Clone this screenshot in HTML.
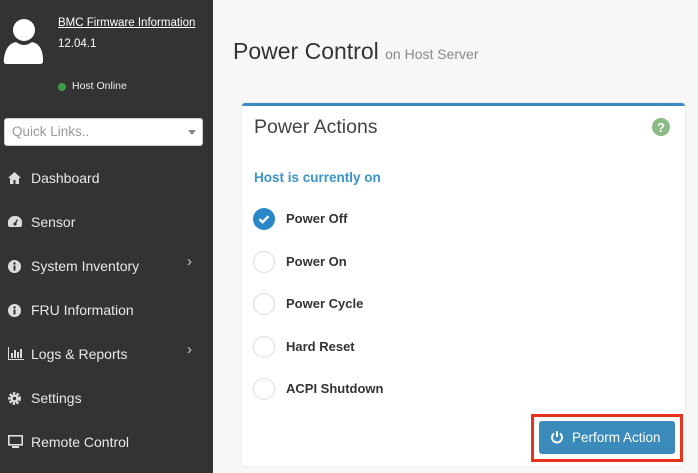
<!DOCTYPE html>
<html><head><meta charset="utf-8"><style>
*{box-sizing:border-box;margin:0;padding:0}
body{width:698px;height:473px;overflow:hidden;background:#f7f7f7;font-family:"Liberation Sans",sans-serif;position:relative}
.sb{position:absolute;left:0;top:0;width:213px;height:473px;background:#333}
.abs{position:absolute;white-space:nowrap}
.menu{color:#e8e8e8;font-size:14px;left:31px}
.ic{position:absolute;left:8px}
.chev{position:absolute;left:187px;color:#ccc;font-size:15px}
.card{position:absolute;left:242px;top:103px;width:443px;height:363px;background:#fff;border-top:3px solid #3a8bbb;border-radius:3px;box-shadow:0 0 2px rgba(0,0,0,.1)}
.rad{position:absolute;left:253px;width:22px;height:22px;border-radius:50%;border:1px solid #ddd;background:#fff}
.lbl{position:absolute;left:286px;font-size:13px;font-weight:bold;color:#333}
</style></head><body>
<div class="sb">
<svg class="abs" style="left:3px;top:18px" width="40" height="46" viewBox="0 0 40 46"><circle cx="21" cy="12" r="11" fill="#fff"/><path d="M3 46 Q0 46 1 40 Q3 26 13 24 Q21 30 29 24 Q39 26 40 40 Q41 46 37 46Z" fill="#fff"/></svg>
<div class="abs" style="left:58px;top:17px;color:#fff;font-size:11.5px;text-decoration:underline">BMC Firmware Information</div>
<div class="abs" style="left:58px;top:38px;color:#fff;font-size:11.5px">12.04.1</div>
<div class="abs" style="left:58px;top:83px;width:8px;height:8px;border-radius:50%;background:#3e9a45"></div>
<div class="abs" style="left:72px;top:80px;color:#eee;font-size:10.5px">Host Online</div>
<div class="abs" style="left:4px;top:118px;width:199px;height:28px;background:#fff;border-radius:3px;border:1px solid #ccc"></div>
<div class="abs" style="left:12px;top:124px;color:#999;font-size:13.5px">Quick Links..</div>
<div class="abs" style="left:188px;top:130px;width:0;height:0;border-left:4px solid transparent;border-right:4px solid transparent;border-top:5px solid #888"></div>

<div class="abs menu" style="top:170px">Dashboard</div>
<svg class="ic" style="top:172px" width="13" height="12" viewBox="0 0 13 12"><path d="M6.5 0L0 6h2v6h3.5V8h2v4H11V6h2z" fill="#ddd"/></svg>
<div class="abs menu" style="top:214px">Sensor</div>
<svg class="ic" style="top:216px" width="14" height="12" viewBox="0 0 14 12"><path d="M7 0A7 7 0 0 0 1 11h12A7 7 0 0 0 7 0z" fill="#ddd"/><circle cx="7" cy="8" r="1.6" fill="#333"/><path d="M7 8L9.5 3.5" stroke="#333" stroke-width="1.3"/></svg>
<div class="abs menu" style="top:258px">System Inventory</div>
<svg class="ic" style="top:260px" width="13" height="13"><circle cx="6.5" cy="6.5" r="6.5" fill="#ddd"/><rect x="5.5" y="5.5" width="2" height="5" fill="#333"/><circle cx="6.5" cy="3.5" r="1.2" fill="#333"/></svg>
<div class="abs chev" style="top:253px">&#8250;</div>
<div class="abs menu" style="top:302px">FRU Information</div>
<svg class="ic" style="top:304px" width="13" height="13"><circle cx="6.5" cy="6.5" r="6.5" fill="#ddd"/><rect x="5.5" y="5.5" width="2" height="5" fill="#333"/><circle cx="6.5" cy="3.5" r="1.2" fill="#333"/></svg>
<div class="abs menu" style="top:346px">Logs &amp; Reports</div>
<svg class="ic" style="top:347px" width="16" height="13"><path d="M0.5 0V12.5H16" stroke="#ddd" fill="none"/><rect x="3" y="6" width="2" height="5" fill="#ddd"/><rect x="6" y="3" width="2" height="8" fill="#ddd"/><rect x="9" y="5" width="2" height="6" fill="#ddd"/><rect x="12" y="2" width="2" height="9" fill="#ddd"/></svg>
<div class="abs chev" style="top:341px">&#8250;</div>
<div class="abs menu" style="top:390px">Settings</div>
<svg class="ic" style="top:392px" width="13" height="13" viewBox="0 0 13 13"><circle cx="6.5" cy="6.5" r="4.8" fill="none" stroke="#ddd" stroke-width="3.2" stroke-dasharray="2.2 1.3"/><circle cx="6.5" cy="6.5" r="4" fill="#ddd"/><circle cx="6.5" cy="6.5" r="1.7" fill="#333"/></svg>
<div class="abs menu" style="top:434px">Remote Control</div>
<svg class="ic" style="top:435px" width="15" height="13"><rect x="0.8" y="0.8" width="13.4" height="9" fill="none" stroke="#ddd" stroke-width="1.6"/><rect x="4" y="11" width="7" height="2" fill="#ddd"/></svg>
</div>

<div class="abs" style="left:233px;top:38px;font-size:23px;color:#333">Power Control <span style="font-size:14px;color:#888">on Host Server</span></div>
<div class="card"></div>
<div class="abs" style="left:254px;top:116px;font-size:19.5px;color:#444">Power Actions</div>
<svg class="abs" style="left:652px;top:118px" width="18" height="18"><circle cx="9" cy="9" r="9" fill="#8bbb87"/><text x="9" y="14" text-anchor="middle" font-size="13" font-weight="bold" fill="#fff" font-family="Liberation Sans">?</text></svg>
<div class="abs" style="left:254px;top:170px;font-size:13.5px;font-weight:bold;color:#3a94c8">Host is currently on</div>

<svg class="abs" style="left:253px;top:208px" width="22" height="22"><circle cx="11" cy="11" r="11" fill="#2a87c8"/><path d="M6.5 11.2l3 3 6-6" stroke="#fff" stroke-width="2.4" fill="none"/></svg>
<div class="lbl" style="top:211px">Power Off</div>
<div class="rad" style="top:251px"></div><div class="lbl" style="top:254px">Power On</div>
<div class="rad" style="top:293px"></div><div class="lbl" style="top:296px">Power Cycle</div>
<div class="rad" style="top:336px"></div><div class="lbl" style="top:339px">Hard Reset</div>
<div class="rad" style="top:378px"></div><div class="lbl" style="top:381px">ACPI Shutdown</div>

<div class="abs" style="left:531px;top:414px;width:152px;height:48px;border:3px solid #e8321e"></div>
<div class="abs" style="left:539px;top:421px;width:136px;height:33px;background:#3a8bbb;border-radius:3px"></div>
<svg class="abs" style="left:550px;top:430px" width="14" height="15" viewBox="0 0 14 15"><path d="M4 3.5A5 5 0 1 0 10 3.5" stroke="#fff" stroke-width="2" fill="none"/><path d="M7 1v6" stroke="#fff" stroke-width="2"/></svg>
<div class="abs" style="left:572px;top:430px;font-size:13.5px;color:#fff">Perform Action</div>
</body></html>
